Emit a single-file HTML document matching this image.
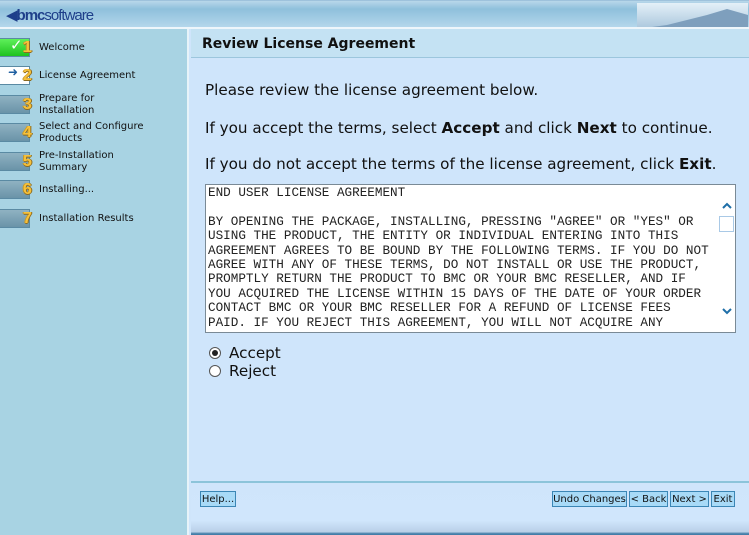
<!DOCTYPE html>
<html><head><meta charset="utf-8"><style>
*{margin:0;padding:0;box-sizing:border-box}
body{width:749px;height:535px;overflow:hidden;position:relative;background:#cfe5fb;font-family:"DejaVu Sans","Liberation Sans",sans-serif}
#hdr{position:absolute;left:0;top:0;width:749px;height:28px;background:linear-gradient(#b9d7ea,#8fc0dc 30%,#b6d8ec);border-top:1px solid #9ec2dc}
#hdr .logo{position:absolute;left:6px;top:5px;font-size:15px;color:#1e3f8a;letter-spacing:-1px;font-family:"Liberation Sans",sans-serif}
#hdr .mtn{position:absolute;left:637px;top:2px;width:111px;height:26px;background:linear-gradient(#e4f0f8,#a9c6dc)}
#sep{position:absolute;left:0;top:27px;width:749px;height:2px;background:#eef6fb}
#left{position:absolute;left:0;top:29px;width:189px;height:506px;background:#a8d3e3;border-right:2px solid #e7f3f9}
#left .it{position:absolute;left:39px;font-size:10px;color:#111;line-height:12px}
.tab{position:absolute;left:0;width:30px;height:19px;background:linear-gradient(#8fb2c2,#6a93a8);border:1px solid #5a8aa3;border-left:none}
.num{position:absolute;left:23px;font-weight:bold;font-size:16px;line-height:19px;color:#f7c13a;font-family:"Liberation Sans",sans-serif;text-shadow:1px 0 0 #8a6a20,0 1px 0 #8a6a20,-1px 0 0 #c99a28}
#title{position:absolute;left:191px;top:29px;width:558px;height:29px;background:#c4e2f3;border-bottom:1px solid #9cc6dd;font-weight:bold;font-size:14px;padding:7px 0 0 11px;color:#111}
.p{position:absolute;left:205px;font-size:15.2px;color:#111;white-space:nowrap}
#box{position:absolute;left:205px;top:184px;width:531px;height:149px;background:#fff;border:1px solid #7a8a96;font-family:"Liberation Mono",monospace;font-size:12.65px;line-height:14.4px;padding:1px 0 0 2px;white-space:pre;color:#222;overflow:hidden}
#sb{position:absolute;right:0;top:0;width:16px;height:147px;background:#fff}
.rad{position:absolute;left:209px;width:12px;height:12px;border:1px solid #555;border-radius:50%;background:#fff}
.rl{position:absolute;left:229px;font-size:15.2px;color:#111}
#foot{position:absolute;left:191px;top:481px;width:558px;height:54px;background:linear-gradient(#cfe5fb 0,#d0e6fc 72%,#b9d0e8 94%,#4f86ae 97%,#3e7aa6 100%);border-top:2px solid #8cc4da}
.btn{position:absolute;top:491px;height:16px;background:#a8daf7;border:1px solid #3b86b5;font-size:10px;line-height:15px;text-align:center;color:#111;white-space:nowrap;overflow:hidden}
</style></head><body>
<div id="hdr"><div class="logo">&#9664;<b>bmc</b>software</div><div class="mtn"><svg width="111" height="26"><polygon points="0,26 30,22 70,12 90,6 111,12 111,26" fill="#7e9fbd"/></svg></div></div>
<div id="sep"></div>
<div id="left">
<div class="tab" style="top:9px;background:linear-gradient(#5ef05a,#1fc21f)"></div><span style="position:absolute;left:10px;top:7px;color:#fff;font-size:15px;font-weight:bold">✓</span><div class="num" style="top:9px">1</div><div class="it" style="top:13px">Welcome</div>
<div class="tab" style="top:37px;background:#fff"></div><span style="position:absolute;left:8px;top:36px;color:#1f5fa0;font-size:12px;font-weight:bold">➜</span><div class="num" style="top:37px">2</div><div class="it" style="top:41px">License Agreement</div>
<div class="tab" style="top:66px"></div><div class="num" style="top:66px">3</div><div class="it" style="top:64px">Prepare for<br>Installation</div>
<div class="tab" style="top:94px"></div><div class="num" style="top:94px">4</div><div class="it" style="top:92px">Select and Configure<br>Products</div>
<div class="tab" style="top:123px"></div><div class="num" style="top:123px">5</div><div class="it" style="top:121px">Pre-Installation<br>Summary</div>
<div class="tab" style="top:151px"></div><div class="num" style="top:151px">6</div><div class="it" style="top:155px">Installing...</div>
<div class="tab" style="top:180px"></div><div class="num" style="top:180px">7</div><div class="it" style="top:184px">Installation Results</div>
</div>
<div id="title">Review License Agreement</div>
<div class="p" style="top:81px">Please review the license agreement below.</div>
<div class="p" style="top:119px">If you accept the terms, select <b>Accept</b> and click <b>Next</b> to continue.</div>
<div class="p" style="top:155px">If you do not accept the terms of the license agreement, click <b>Exit</b>.</div>
<div id="box">END USER LICENSE AGREEMENT

BY OPENING THE PACKAGE, INSTALLING, PRESSING "AGREE" OR "YES" OR
USING THE PRODUCT, THE ENTITY OR INDIVIDUAL ENTERING INTO THIS
AGREEMENT AGREES TO BE BOUND BY THE FOLLOWING TERMS. IF YOU DO NOT
AGREE WITH ANY OF THESE TERMS, DO NOT INSTALL OR USE THE PRODUCT,
PROMPTLY RETURN THE PRODUCT TO BMC OR YOUR BMC RESELLER, AND IF
YOU ACQUIRED THE LICENSE WITHIN 15 DAYS OF THE DATE OF YOUR ORDER
CONTACT BMC OR YOUR BMC RESELLER FOR A REFUND OF LICENSE FEES
PAID. IF YOU REJECT THIS AGREEMENT, YOU WILL NOT ACQUIRE ANY<div id="sb"><svg width="16" height="147"><path d="M4 23 L8 19 L12 23" stroke="#1f6fa8" stroke-width="2" fill="none"/><rect x="0.5" y="31.5" width="14" height="15" fill="#fff" stroke="#a9c9e6"/><path d="M4 124 L8 128 L12 124" stroke="#1f6fa8" stroke-width="2" fill="none"/></svg></div></div>
<div class="rad" style="top:347px"><div style="position:absolute;left:2px;top:2px;width:6px;height:6px;border-radius:50%;background:#222"></div></div><div class="rl" style="top:344px">Accept</div>
<div class="rad" style="top:365px"></div><div class="rl" style="top:362px">Reject</div>
<div id="foot"></div>
<div class="btn" style="left:200px;width:36px">Help...</div>
<div class="btn" style="left:552px;width:75px">Undo Changes</div>
<div class="btn" style="left:629px;width:39px">&lt; Back</div>
<div class="btn" style="left:670px;width:39px">Next &gt;</div>
<div class="btn" style="left:711px;width:24px">Exit</div>
</body></html>
